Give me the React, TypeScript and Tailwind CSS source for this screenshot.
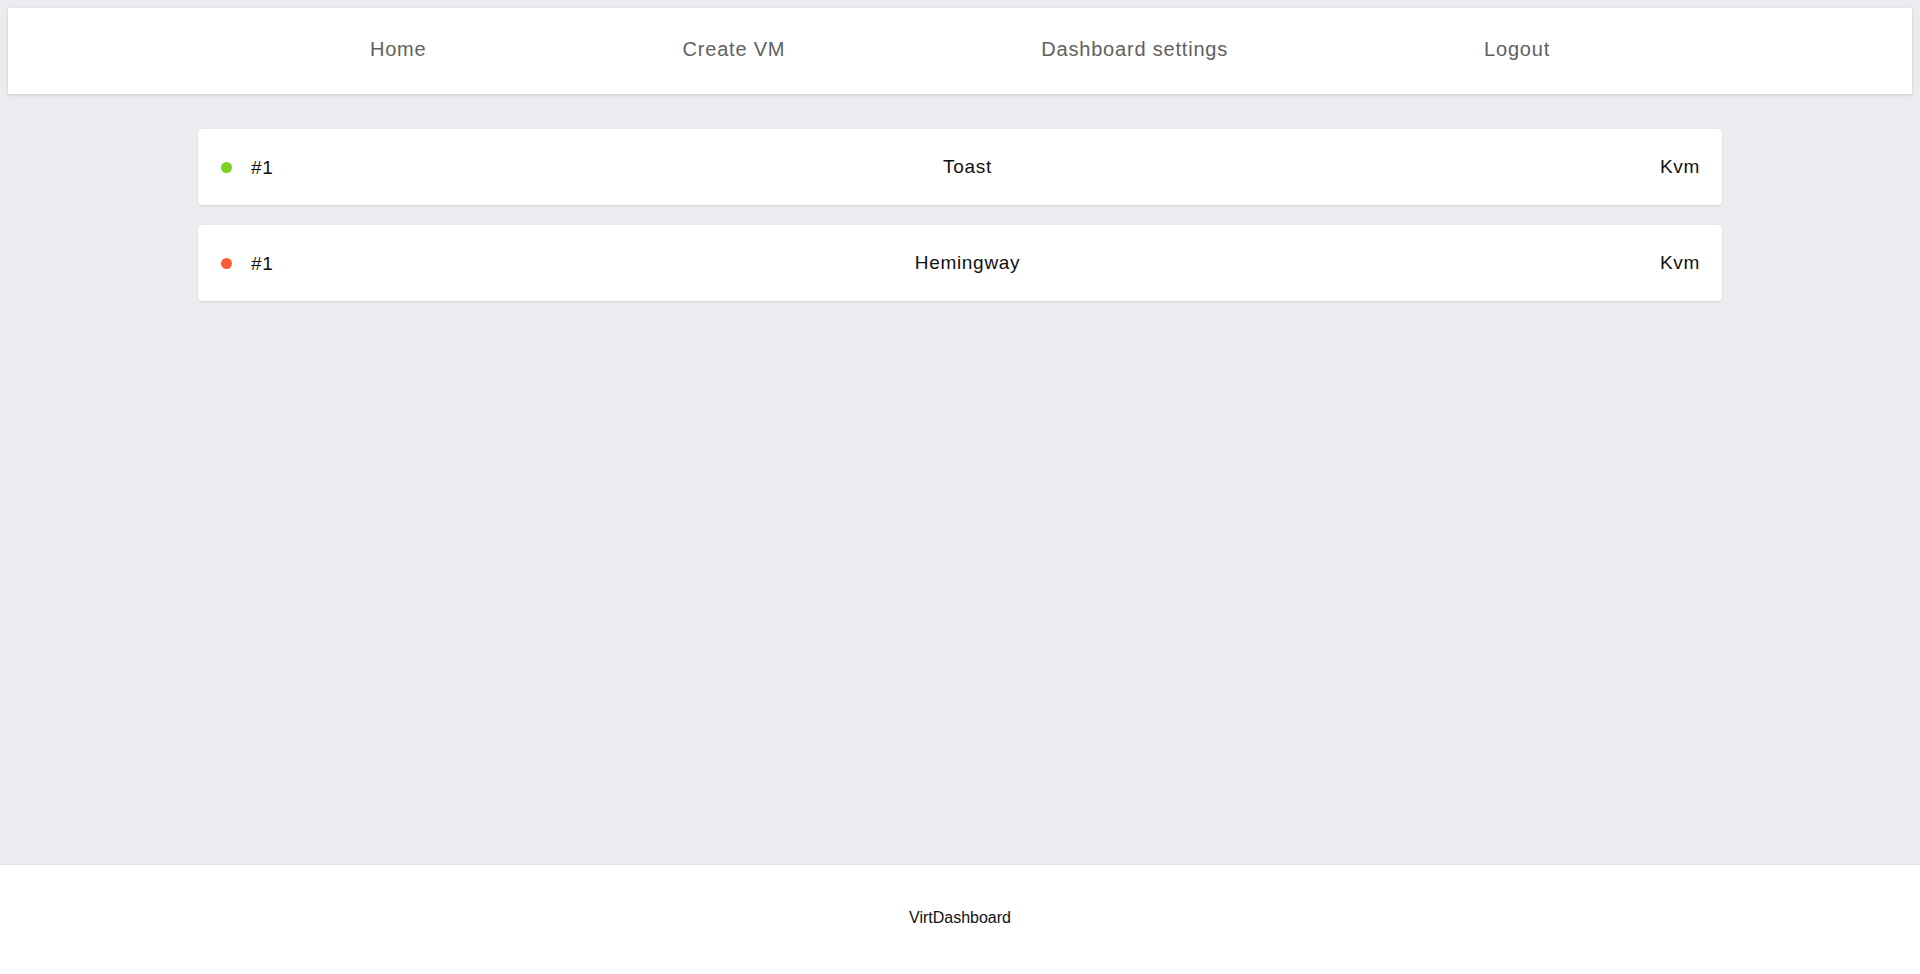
type Vm = {
  id: number;
  name: string;
  kind: string;
  running: boolean;
};

const vms: Vm[] = [
  { id: 1, name: "Toast", kind: "Kvm", running: true },
  { id: 1, name: "Hemingway", kind: "Kvm", running: false },
];

const links = ["Home", "Create VM", "Dashboard settings", "Logout"];

const NavBar = () => {
  return (
    <nav className="mx-2 mt-2 h-[86px] bg-white shadow-[0_1px_3px_rgba(0,0,0,0.15)] flex items-center justify-center gap-[256px]">
      {links.map((link) => (
        <a
          key={link}
          href="#"
          className="text-[20px] tracking-[0.8px] text-[#616161] leading-none pb-[4px]"
        >
          {link}
        </a>
      ))}
    </nav>
  );
};

const VmRow = ({ vm }: { vm: Vm }) => {
  return (
    <div className="h-[76px] bg-white rounded-[4px] shadow-[0_1px_2px_rgba(0,0,0,0.12)] grid grid-cols-[1fr_auto_1fr] items-center pl-[23px] pr-[22px] text-[19px] tracking-[0.7px] text-[#111]">
      <div className="flex items-center gap-[19px]">
        <span
          className={
            vm.running
              ? "w-[11px] h-[11px] rounded-full bg-[#7ed321]"
              : "w-[11px] h-[11px] rounded-full bg-[#ff5a36]"
          }
        />
        <span className="pt-[2px]">#{vm.id}</span>
      </div>
      <div className="pl-[14px] text-center">{vm.name}</div>
      <div className="text-right">{vm.kind}</div>
    </div>
  );
};

const App = () => {
  return (
    <div
      className="min-h-screen flex flex-col bg-[#ebecf0]"
      style={{ fontFamily: '"Liberation Sans", Arial, sans-serif' }}
    >
      <NavBar />
      <main className="flex-1 pt-[35px]">
        <div className="w-[1524px] mx-auto flex flex-col gap-[20px]">
          {vms.map((vm) => (
            <VmRow key={vm.name} vm={vm} />
          ))}
        </div>
      </main>
      <footer className="h-[110px] bg-white border-t border-[#e2e3e7] flex items-center justify-center text-[16px] text-[#111] pb-[4px]">
        VirtDashboard
      </footer>
    </div>
  );
};

export default App;
